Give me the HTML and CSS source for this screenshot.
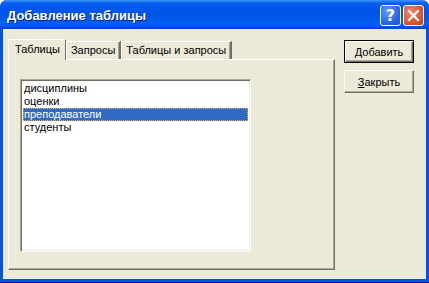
FILE: index.html
```html
<!DOCTYPE html>
<html lang="ru">
<head>
    <meta charset="UTF-8">
    <title>Добавление таблицы</title>
    <link rel="stylesheet" href="styles.css">
</head>
<body>
    <div class="window">
        <div class="titlebar">
            <span class="title">Добавление таблицы</span>
            <div class="title-buttons">
                <div class="tbtn help">?</div>
                <div class="tbtn close">
                    <svg width="13" height="13" viewBox="0 0 13 13">
                        <path d="M2 2 L11 11 M11 2 L2 11" stroke="#fff" stroke-width="2.2" stroke-linecap="square"/>
                    </svg>
                </div>
            </div>
        </div>

        <div class="client">
            <div class="left">
                <div class="tabs">
                    <div class="tab active">Таблицы</div>
                    <div class="tab">Запросы</div>
                    <div class="tab">Таблицы и запросы</div>
                </div>
                <div class="panel">
                    <div class="listbox">
                        <div class="item">дисциплины</div>
                        <div class="item">оценки</div>
                        <div class="item selected">преподаватели</div>
                        <div class="item">студенты</div>
                    </div>
                </div>
            </div>

            <div class="buttons">
                <button class="btn default"><u>Д</u>обавить</button>
                <button class="btn"><u>З</u>акрыть</button>
            </div>
        </div>
    </div>
</body>
</html>
```

FILE: styles.css
```css
body {
    margin: 0;
    background: #fff;
    font-family: 'Liberation Sans', Arial, sans-serif;
    font-size: 11px;
    color: #000;
}
.window {
    width: 429px;
    height: 283px;
    box-sizing: border-box;
    background: #0055e5;
    padding: 0 3px 3px 3px;
    display: flex;
    flex-direction: column;
    border-radius: 7px 7px 0 0;
    border-bottom: 1px solid #00138c;
}
.titlebar {
    height: 29px;
    margin: 0 -3px;
    padding: 0 5px 0 7px;
    display: flex;
    align-items: center;
    justify-content: space-between;
    border-radius: 7px 7px 0 0;
    background: linear-gradient(#3d95ff 0, #0a5fe8 3px, #0058ee 6px, #0055e5 50%, #0060f5 85%, #0050e0 93%, #003dd7 100%);
}
.title {
    color: #fff;
    font-family: 'Liberation Sans', Arial, sans-serif;
    font-weight: bold;
    font-size: 13px;
    text-shadow: 1px 1px 0 #0a1e6e;
    padding-top: 1px;
}
.title-buttons {
    display: flex;
    gap: 2px;
    padding-top: 2px;
}
.tbtn {
    width: 21px;
    height: 21px;
    box-sizing: border-box;
    border: 1px solid #fff;
    border-radius: 3px;
    display: flex;
    align-items: center;
    justify-content: center;
}
.help {
    background: radial-gradient(circle at 35% 30%, #5e9cff, #2a66e8 60%, #1a4fd0);
    color: #fff;
    font-family: 'DejaVu Sans', sans-serif;
    font-weight: bold;
    font-size: 16px;
}
.close {
    background: radial-gradient(circle at 35% 30%, #f0876a, #e0532e 60%, #c8401f);
}
.client {
    flex: 1;
    background: #ece9d8;
    display: flex;
    padding: 10px 0 0 5px;
}
.left {
    width: 327px;
    display: flex;
    flex-direction: column;
}
.tabs {
    display: flex;
    align-items: flex-end;
    height: 20px;
    padding-left: 1px;
}
.tab {
    height: 18px;
    box-sizing: border-box;
    border-top: 1px solid #fff;
    border-left: 1px solid #fff;
    border-right: 2px solid;
    border-right-color: #716f64;
    box-shadow: inset -1px 0 0 #aca899;
    padding: 2px 4px 0 4px;
    line-height: 13px;
    background: #ece9d8;
}
.tab.active {
    height: 21px;
    margin-bottom: -1px;
    padding: 3px 5px 0 6px;
    position: relative;
    z-index: 1;
    border-right: 1px solid #716f64;
    box-shadow: none;
    margin-left: -1px;
}
.panel {
    height: 211px;
    box-sizing: border-box;
    border-top: 1px solid #fff;
    border-left: 1px solid #fff;
    border-right: 1px solid #716f64;
    border-bottom: 1px solid #716f64;
    box-shadow: inset -1px -1px 0 #aca899;
    padding: 19px 0 0 11px;
}
.listbox {
    width: 231px;
    height: 173px;
    box-sizing: border-box;
    background: #fff;
    border-top: 1px solid #aca899;
    border-left: 1px solid #aca899;
    border-right: 1px solid #fff;
    border-bottom: 1px solid #fff;
    box-shadow: inset 1px 1px 0 #716f64, inset -1px -1px 0 #f1efe2;
    padding: 2px 2px 0 2px;
}
.item {
    height: 13px;
    line-height: 13px;
    padding-left: 1px;
    white-space: nowrap;
}
.item.selected {
    background: #316ac5;
    color: #fff;
    outline: 1px dotted #e8b060;
    outline-offset: -1px;
}
.buttons {
    display: flex;
    flex-direction: column;
    gap: 7px;
    padding: 1px 0 0 9px;
}
.btn {
    width: 70px;
    height: 23px;
    box-sizing: border-box;
    font-family: inherit;
    font-size: 11px;
    background: #ece9d8;
    color: #000;
    border-top: 1px solid #fff;
    border-left: 1px solid #fff;
    border-right: 1px solid #716f64;
    border-bottom: 1px solid #716f64;
    box-shadow: inset -1px -1px 0 #aca899;
    padding: 0;
}
.btn.default {
    border: 1px solid #000;
    box-shadow: inset 1px 1px 0 #fff, inset -1px -1px 0 #716f64, inset -2px -2px 0 #aca899;
}
.btn u {
    text-decoration: underline;
}
```
